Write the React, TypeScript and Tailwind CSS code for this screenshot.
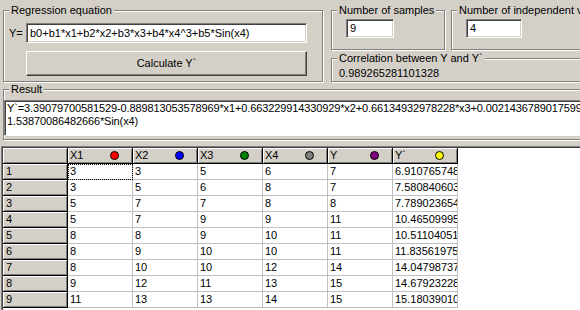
import type { ReactNode } from "react";

const rows: string[][] = [
  ["3", "3", "5", "6", "7", "6.910765748"],
  ["3", "5", "6", "8", "7", "7.580840603"],
  ["5", "7", "7", "8", "8", "7.789023654"],
  ["5", "7", "9", "9", "11", "10.46509995"],
  ["8", "8", "9", "10", "11", "10.51104051"],
  ["8", "9", "10", "10", "11", "11.83561975"],
  ["8", "10", "10", "12", "14", "14.04798737"],
  ["9", "12", "11", "13", "15", "14.67923228"],
  ["11", "13", "13", "14", "15", "15.18039010"],
];

const headers = [
  { name: "X1", dot: "bg-[#ff0000]" },
  { name: "X2", dot: "bg-[#0000ff]" },
  { name: "X3", dot: "bg-[#008000]" },
  { name: "X4", dot: "bg-[#808080]" },
  { name: "Y", dot: "bg-[#800080]" },
  { name: "Y`", dot: "bg-[#ffff00]" },
];

function GroupBox({ label, className, children }: { label: string; className: string; children?: ReactNode }) {
  return (
    <div className={`relative border border-[#808080] shadow-[inset_1px_1px_0_#fff,1px_1px_0_#fff] ${className}`}>
      <span className="absolute -top-[7px] left-[5px] whitespace-nowrap bg-[#d4d0c8] px-[2px] leading-[13px]">
        {label}
      </span>
      {children}
    </div>
  );
}

function Edit({ value, className }: { value: string; className: string }) {
  return (
    <div
      className={`flex items-center overflow-hidden whitespace-nowrap border border-t-[#808080] border-l-[#808080] border-b-white border-r-white bg-white pl-[3px] shadow-[inset_1px_1px_0_#404040,inset_-1px_-1px_0_#d4d0c8] ${className}`}
    >
      {value}
    </div>
  );
}

const fixedCell =
  "h-[16px] w-[65px] shrink-0 border-r border-b border-black bg-[#d4d0c8] shadow-[inset_1px_1px_0_#fff,inset_-1px_-1px_0_#808080] leading-[15px]";
const dataCell =
  "h-[16px] w-[65px] shrink-0 overflow-hidden whitespace-nowrap border-r border-b border-[#c0c0c0] bg-white pl-[2px] leading-[15px]";

export default function App() {
  return (
    <div className="h-[310px] w-[580px] overflow-hidden bg-[#d4d0c8] pt-[10px] font-['Liberation_Sans',Arial,sans-serif] text-[11px] text-black">
      <div className="ml-[3px] flex">
        <GroupBox label="Regression equation" className="h-[72px] w-[320px] shrink-0 pl-[5px] pt-[12px]">
          <div className="flex items-center">
            <span className="w-[17px]">Y=</span>
            <Edit value="b0+b1*x1+b2*x2+b3*x3+b4*x4^3+b5*Sin(x4)" className="h-[20px] w-[281px]" />
          </div>
          <div className="ml-[17px] mt-[8px] flex h-[25px] w-[281px] items-center justify-center border border-t-white border-l-white border-b-[#404040] border-r-[#404040] shadow-[inset_-1px_-1px_0_#808080]">
            Calculate Y`
          </div>
        </GroupBox>
        <div className="ml-[8px] flex shrink-0 flex-col">
          <div className="flex gap-[6px]">
            <GroupBox label="Number of samples" className="h-[40px] w-[114px] shrink-0 pl-[14px] pt-[8px]">
              <Edit value="9" className="h-[19px] w-[48px]" />
            </GroupBox>
            <GroupBox label="Number of independent variables" className="h-[40px] w-[160px] shrink-0 pl-[14px] pt-[8px]">
              <Edit value="4" className="h-[19px] w-[56px]" />
            </GroupBox>
          </div>
          <GroupBox label="Correlation between Y and Y`" className="mt-[8px] h-[24px] w-[280px] pl-[7px] pt-[6px]">
            <span className="leading-[13px]">0.989265281101328</span>
          </GroupBox>
        </div>
      </div>

      <GroupBox label="Result" className="ml-[3px] mt-[7px] h-[51px] w-[600px] pt-[10px]">
        <div className="h-[36px] w-[596px] overflow-hidden border border-t-[#808080] border-l-[#808080] border-b-white border-r-white bg-white pl-[2px] pt-[1px] leading-[13px] tracking-[-0.12px] shadow-[inset_1px_1px_0_#404040]">
          <div className="whitespace-nowrap">
            Y`=3.39079700581529-0.889813053578969*x1+0.663229914330929*x2+0.66134932978228*x3+0.0021436789017599*x4^3-
          </div>
          <div className="whitespace-nowrap">1.53870086482666*Sin(x4)</div>
        </div>
      </GroupBox>

      <div className="ml-[1px] mt-[6px] h-[200px] w-[600px] border border-t-[#808080] border-l-[#808080] border-b-white border-r-white bg-white p-[1px] shadow-[inset_1px_1px_0_#404040]">
        <div className="flex">
          <div className={fixedCell} />
          {headers.map((h) => (
            <div key={h.name} className={`${fixedCell} flex items-center justify-between pl-[2px] pr-[13px]`}>
              <span>{h.name}</span>
              <span className={`h-[9px] w-[9px] rounded-full border border-black ${h.dot}`} />
            </div>
          ))}
        </div>
        {rows.map((r, i) => (
          <div key={i} className="flex">
            <div className={`${fixedCell} pl-[3px]`}>{i + 1}</div>
            {r.map((v, j) => (
              <div
                key={j}
                className={`${dataCell} ${i === 0 && j === 0 ? "outline-1 -outline-offset-1 outline-dotted outline-black" : ""}`}
              >
                {v}
              </div>
            ))}
          </div>
        ))}
      </div>
    </div>
  );
}
